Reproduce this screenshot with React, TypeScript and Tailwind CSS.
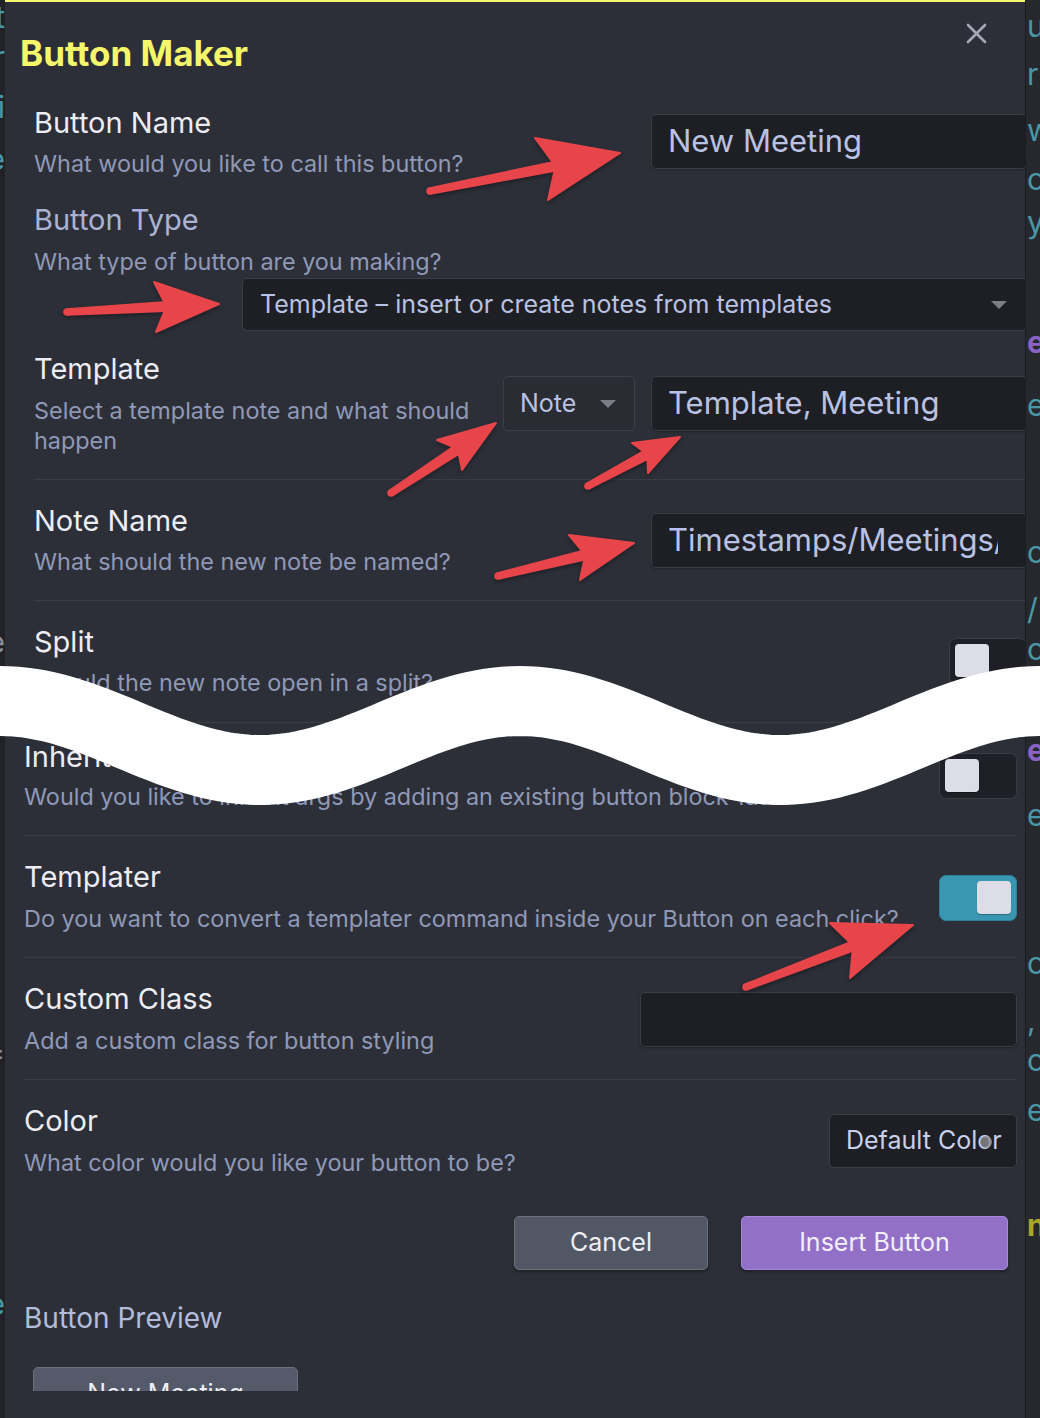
type Pt = [number, number];

const WAVE = (() => {
  const pts: string[] = [];
  for (let x = -40; x <= 1080; x += 8) {
    const y = 735.5 - 34.5 * Math.cos((2 * Math.PI * x) / 520);
    pts.push(`${x},${y.toFixed(1)}`);
  }
  return pts.join(" ");
})();

const ARROWS: { s: Pt; t: Pt; c1: Pt; c2: Pt }[] = [
  { s: [430, 191], t: [620, 153], c1: [535, 138], c2: [548, 200] },
  { s: [67, 312], t: [219, 304], c1: [154, 282], c2: [156, 332] },
  { s: [391, 493], t: [496, 423], c1: [437, 440], c2: [462, 470] },
  { s: [588, 486], t: [680, 437], c1: [632, 443], c2: [648, 473] },
  { s: [498, 576], t: [634, 543], c1: [569, 535], c2: [580, 580] },
  { s: [746, 987], t: [913, 925], c1: [830, 923], c2: [850, 978] },
];

function arrowShapes(a: { s: Pt; t: Pt; c1: Pt; c2: Pt }) {
  const mx = (a.c1[0] + a.c2[0]) / 2;
  const my = (a.c1[1] + a.c2[1]) / 2;
  const bx = mx + (a.t[0] - mx) * 0.18;
  const by = my + (a.t[1] - my) * 0.18;
  const dx = bx - a.s[0];
  const dy = by - a.s[1];
  const len = Math.hypot(dx, dy);
  const nx = -dy / len;
  const ny = dx / len;
  const w0 = 3.8;
  const w1 = 5.5;
  const shaft = [
    [a.s[0] + nx * w0, a.s[1] + ny * w0],
    [bx + nx * w1, by + ny * w1],
    [bx - nx * w1, by - ny * w1],
    [a.s[0] - nx * w0, a.s[1] - ny * w0],
  ]
    .map((p) => p.map((v) => v.toFixed(1)).join(","))
    .join(" ");
  const head = [a.t, a.c1, [bx, by], a.c2]
    .map((p) => p.map((v) => v.toFixed(1)).join(","))
    .join(" ");
  return { shaft, head, w0 };
}

const RIGHT_BITS = [
  { cls: "mt-[11px] text-[#4a98a5]", t: "ur" },
  { cls: "mt-[18px] text-[#4a98a5]", t: "rn" },
  { cls: "mt-[26px] text-[#4a98a5]", t: "wi" },
  { cls: "mt-[19px] text-[#4a98a5]", t: "co" },
  { cls: "mt-[13px] text-[#4a98a5]", t: "yo" },
  { cls: "mt-[90px] text-[#8a63c6] font-bold", t: "et" },
  { cls: "mt-[33px] text-[#4a98a5]", t: "ev" },
  { cls: "mt-[117px] text-[#4a98a5]", t: "co" },
  { cls: "mt-[27px] text-[#4a98a5]", t: "/" },
  { cls: "mt-[10px] text-[#4a98a5]", t: "or" },
  { cls: "mt-[71px] text-[#8a63c6] font-bold", t: "et" },
  { cls: "mt-[35px] text-[#4a98a5]", t: "ev" },
  { cls: "mt-[118px] text-[#4a98a5]", t: "co" },
  { cls: "mt-[27px] text-[#4a98a5]", t: "," },
  { cls: "mt-[10px] text-[#4a98a5]", t: "or" },
  { cls: "mt-[20px] text-[#4a98a5]", t: "ev" },
  { cls: "mt-[85px] text-[#a9a72a] font-bold", t: "n" },
];

const LEFT_BITS = [
  { cls: "mt-[2px] text-[#4a98a5]", t: "st" },
  { cls: "mt-[10px] text-[#4a98a5]", t: "or" },
  { cls: "mt-[20px] text-[#4a98a5]", t: "hi" },
  { cls: "mt-[22px] text-[#4a98a5]", t: "he" },
  { cls: "mt-[453px] text-[#8a8f9a]", t: "ne" },
  { cls: "mt-[380px] text-[#8a8f9a]", t: "==" },
  { cls: "mt-[222px] text-[#4a98a5]", t: "ne" },
];

function Info({ label, desc, labelCls = "text-[#ececf2]" }: { label: string; desc: React.ReactNode; labelCls?: string }) {
  return (
    <div className="min-w-0 flex-1">
      <div className={`text-[29px] leading-[32px] ${labelCls}`}>{label}</div>
      <div className="text-[23.4px] leading-[30px] text-[#8f99b7]">{desc}</div>
    </div>
  );
}

function TextInput({ value, cls }: { value?: string; cls: string }) {
  return (
    <div className={`flex shrink-0 items-center overflow-hidden whitespace-nowrap rounded-[5px] border border-[#3b3d47] bg-[#1e1f25] pl-[16px] text-[31px] text-[#b9c2e2] shadow-[0_1px_2px_rgba(0,0,0,0.3)] ${cls}`}>
      <span className="overflow-hidden">{value}</span>
    </div>
  );
}

function Caret() {
  return (
    <svg width="18" height="10" viewBox="0 0 18 10" className="shrink-0">
      <path d="M1 1 L17 1 L9 9 Z" fill="#7b7d87" />
    </svg>
  );
}

function Toggle({ on, cls }: { on?: boolean; cls: string }) {
  return (
    <div
      className={`flex h-[46px] w-[78px] shrink-0 items-start rounded-[7px] border p-[5px] ${
        on ? "justify-end border-[#2f7f98] bg-[#3a97b4]" : "justify-start border-[#3a3c46] bg-[#1f2027]"
      } ${cls}`}
    >
      <div className="h-[33px] w-[34px] rounded-[4px] bg-[#dcdde6] shadow-[0_1px_1px_rgba(0,0,0,0.3)]" />
    </div>
  );
}

export default function App() {
  return (
    <div className="relative flex h-[1418px] w-[1040px] overflow-hidden bg-[#1f2026] font-['Inter',sans-serif]">
      {/* editor behind, left edge */}
      <div className="flex w-[5px] shrink-0 flex-col items-end overflow-hidden bg-[#202228] text-[30px] leading-[30px]">
        {LEFT_BITS.map((b, i) => (
          <div key={i} className={`whitespace-nowrap ${b.cls}`}>
            {b.t}
          </div>
        ))}
      </div>

      {/* modal */}
      <div className="h-full w-[1020px] shrink-0 overflow-hidden border-t-2 border-[#f6f66a] bg-[#2d2f38]">
        <div className="flex items-start justify-between pl-[15px] pr-[38px] pt-[21px]">
          <div className="mt-[10px] text-[35px] font-bold leading-[40px] text-[#f6f66a]">Button Maker</div>
          <svg width="21" height="21" viewBox="0 0 21 21">
            <path d="M2 2 L19 19 M19 2 L2 19" stroke="#a4a8b4" strokeWidth="2.6" strokeLinecap="round" />
          </svg>
        </div>

        {/* upper part of the form */}
        <div className="pl-[29px]">
          <div className="w-[993px]">
            <div className="mt-[34px] flex items-start gap-[19px]">
              <Info label="Button Name" desc={<div className="mt-[10px]">What would you like to call this button?</div>} />
              <TextInput value="New Meeting" cls="mt-[7px] h-[55px] w-[376px] pr-[15px]" />
            </div>

            <div className="mt-[25px]">
              <Info label="Button Type" labelCls="text-[#aab3d3]" desc={<div className="mt-[11px]">What type of button are you making?</div>} />
              <div className="mt-[1px] flex justify-end">
                <div className="flex h-[53px] w-[785px] items-center justify-between rounded-[5px] border border-[#3b3d47] bg-[#1e1f25] pl-[17px] pr-[18px] text-[25px] text-[#b9c2e2]">
                  <span>Template – insert or create notes from templates</span>
                  <Caret />
                </div>
              </div>
            </div>

            <div className="mt-[22px] flex items-start gap-[19px] border-b border-[#393b45] pb-[23px]">
              <Info
                label="Template"
                desc={<div className="mt-[11px]">Select a template note and what should happen</div>}
              />
              <div className="mt-[23px] flex shrink-0 gap-[16px]">
                <div className="flex h-[55px] w-[132px] items-center justify-between rounded-[5px] border border-[#3b3d47] bg-[#2a2c34] pl-[16px] pr-[17px] text-[25px] text-[#b9c2e2]">
                  <span>Note</span>
                  <Caret />
                </div>
                <TextInput value="Template, Meeting" cls="h-[55px] w-[376px] pr-[15px]" />
              </div>
            </div>

            <div className="flex items-start gap-[19px] border-b border-[#393b45] pb-[23px] pt-[25px]">
              <Info label="Note Name" desc={<div className="mt-[10px]">What should the new note be named?</div>} />
              <TextInput value="Timestamps/Meetings/{{date}}" cls="mt-[8px] h-[55px] w-[376px] pr-[28px]" />
            </div>

            <div className="flex items-start gap-[19px] border-b border-[#393b45] pb-[24px] pt-[25px]">
              <Info label="Split" desc={<div className="mt-[10px]">Should the new note open in a split?</div>} />
              <Toggle cls="mt-[12px]" />
            </div>
          </div>
        </div>

        {/* lower part of the form */}
        <div className="pl-[19px] pr-[8px]">
          <div className="flex items-start gap-[19px] border-b border-[#393b45] pb-[23px] pt-[18px]">
            <Info
              label="Inherit Button Args"
              desc={<div className="mt-[9px] whitespace-nowrap">Would you like to inherit args by adding an existing button block-id?</div>}
            />
            <Toggle cls="mt-[12px]" />
          </div>

          <div className="flex items-start gap-[19px] border-b border-[#393b45] pb-[23px] pt-[25px]">
            <Info
              label="Templater"
              desc={<div className="mt-[11px] whitespace-nowrap">Do you want to convert a templater command inside your Button on each click?</div>}
            />
            <Toggle on cls="mt-[14px]" />
          </div>

          <div className="flex items-start gap-[19px] border-b border-[#393b45] pb-[23px] pt-[25px]">
            <Info label="Custom Class" desc={<div className="mt-[11px]">Add a custom class for button styling</div>} />
            <TextInput cls="mt-[9px] h-[55px] w-[377px] pr-[15px]" />
          </div>

          <div className="flex items-start gap-[19px] pt-[25px]">
            <Info label="Color" desc={<div className="mt-[11px]">What color would you like your button to be?</div>} />
            <div className="relative mt-[9px] flex h-[54px] w-[188px] shrink-0 items-center rounded-[5px] border border-[#3b3d47] bg-[#1e1f25] pl-[16px] text-[25px] text-[#c9d0ea]">
              <span className="whitespace-nowrap">Default Color</span>
              <div className="absolute left-[150px] top-[21px] h-[12px] w-[12px] rounded-full bg-[#8a8a8e]/80" />
            </div>
          </div>

          <div className="mt-[38px] flex justify-end gap-[33px] pr-[9px]">
            <div className="flex h-[54px] w-[194px] items-center justify-center rounded-[5px] border border-[#6b707d] bg-[#525766] text-[25px] text-[#eeeef3] shadow-[0_2px_3px_rgba(0,0,0,0.3)]">
              Cancel
            </div>
            <div className="flex h-[54px] w-[267px] items-center justify-center rounded-[5px] border border-[#a588d6] bg-[#9370c8] text-[25px] text-[#f2effa] shadow-[0_2px_3px_rgba(0,0,0,0.3)]">
              Insert Button
            </div>
          </div>

          <div className="mt-[32px] text-[28px] leading-[32px] text-[#b4bcdc]">Button Preview</div>
          <div className="h-[57px] overflow-hidden">
            <div className="ml-[9px] mt-[33px] flex h-[54px] w-[265px] items-center justify-center rounded-[5px] border border-[#6b707d] bg-[#545a69] text-[25px] text-[#eeeef3]">
              New Meeting
            </div>
          </div>
        </div>
      </div>

      {/* editor behind, right edge */}
      <div className="flex w-[15px] shrink-0 flex-col overflow-hidden border-l border-[#1b1c20] bg-[#26282e] pl-[1px] text-[30px] leading-[30px]">
        {RIGHT_BITS.map((b, i) => (
          <div key={i} className={`whitespace-nowrap ${b.cls}`}>
            {b.t}
          </div>
        ))}
      </div>

      {/* torn-page wave */}
      <svg className="pointer-events-none absolute left-0 top-0" width="1040" height="1418" viewBox="0 0 1040 1418">
        <polyline points={WAVE} fill="none" stroke="#ffffff" strokeWidth="70" />
      </svg>

      {/* red annotation arrows */}
      <svg
        className="pointer-events-none absolute left-0 top-0 drop-shadow-[0_2px_2px_rgba(0,0,0,0.35)]"
        width="1040"
        height="1418"
        viewBox="0 0 1040 1418"
      >
        {ARROWS.map((a, i) => {
          const s = arrowShapes(a);
          return (
            <g key={i} fill="#e8454a">
              <circle cx={a.s[0]} cy={a.s[1]} r={s.w0} />
              <polygon points={s.shaft} />
              <polygon points={s.head} strokeLinejoin="round" stroke="#e8454a" strokeWidth="2" />
            </g>
          );
        })}
      </svg>
    </div>
  );
}
